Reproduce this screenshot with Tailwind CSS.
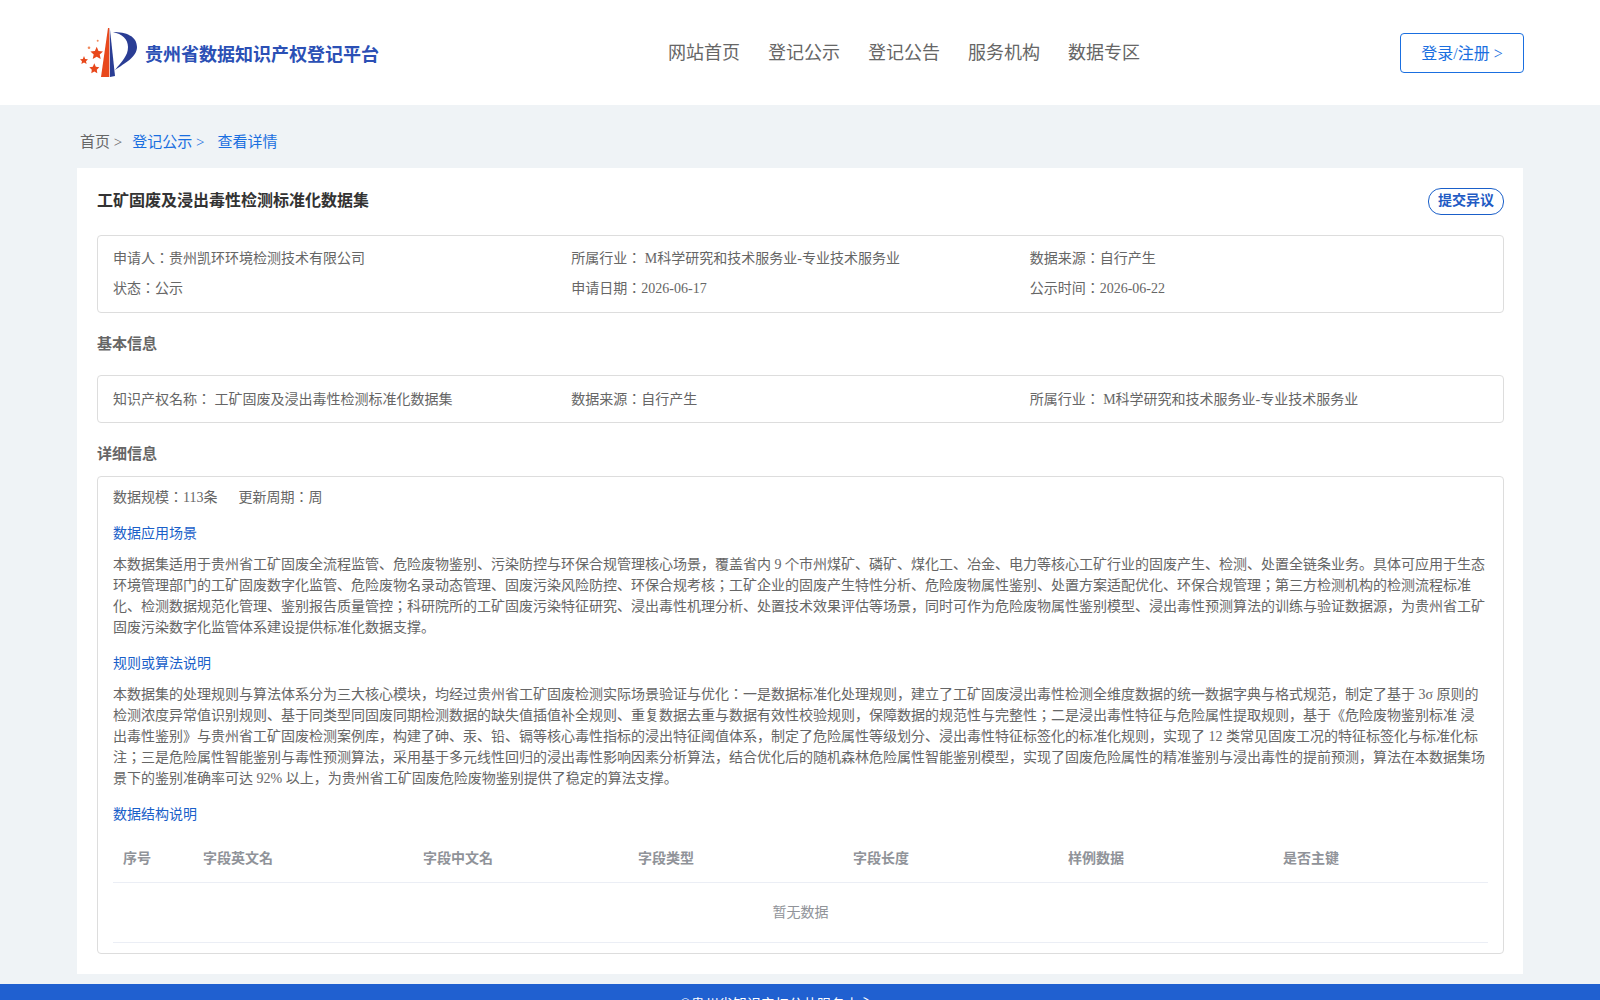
<!DOCTYPE html>
<html lang="en">
<head>
    <meta charset="UTF-8">
    <title>工矿固废及浸出毒性检测标准化数据集</title>
    <script src="https://cdn.jsdelivr.net/npm/@tailwindcss/browser@4"></script>
</head>
<body class="h-[1000px] overflow-hidden bg-[#eff3f6] font-['Liberation_Serif','Noto_Sans_CJK_JP',serif] text-sm text-[#666]">
    <!-- Header -->
    <header class="flex h-[105px] items-center bg-white pl-[80px] pr-[76px]">
        <div class="flex w-[588px] shrink-0 items-center">
            <svg class="h-[51px] w-[60px] shrink-0" viewBox="0 0 60 51">
                <path d="M28 1 L29.300 1 L29.300 50 L21 50 Z" fill="#e8481c"/>
                <path d="M29.800 1 L35 49 L30 50 Z" fill="#2a3d94"/>
                <path d="M33 5 C46 5 57 9 57 20 C57 30 45 36 35 43 C42 34 48 29 48 20 C48 12 42 7 33 5 Z" fill="#2a3d94"/>
                <polygon points="16.700,19.700 18.500,24 23,24.500 19.700,27.500 20.700,32 16.700,29.700 12.700,32 13.700,27.500 10.400,24.500 14.900,24" fill="#e8481c"/>
                <polygon points="4,29 5.200,32 8,32.300 6,34.300 6.600,37 4,35.600 1.400,37 2,34.300 0,32.300 2.800,32" fill="#e8481c"/>
                <polygon points="14.300,36.300 15.800,39.800 19.300,40.300 16.800,42.800 17.300,46.300 14.300,44.600 11.300,46.300 11.800,42.800 9.300,40.300 12.800,39.800" fill="#e8481c"/>
                <circle cx="9" cy="20.700" r="1.300" fill="#f08a5d"/>
                <circle cx="17.700" cy="13.700" r="1" fill="#f08a5d"/>
            </svg>
            <span class="ml-[5px] mt-[5px] text-lg font-bold whitespace-nowrap text-[#2b50b5]">贵州省数据知识产权登记平台</span>
        </div>
        <nav class="flex shrink-0 gap-[28px] text-lg leading-[24px] whitespace-nowrap text-[#666]">
            <a>网站首页</a>
            <a>登记公示</a>
            <a>登记公告</a>
            <a>服务机构</a>
            <a>数据专区</a>
        </nav>
        <a class="ml-auto flex h-10 w-[124px] items-center justify-center rounded border border-[#1a6fe0] pt-[2px] text-base text-[#1a6fe0]">登录/注册 &gt;</a>
    </header>

    <div class="mx-[77px]">
        <!-- Breadcrumb -->
        <div class="flex h-[63px] items-center pl-[3px] pt-[13px] text-[15px]">
            <span>首页 &gt;</span>
            <span class="ml-[10px] text-[#1a6fe0]">登记公示 &gt;</span>
            <span class="ml-[13px] text-[#1a6fe0]">查看详情</span>
        </div>

        <!-- Main card -->
        <main class="h-[806px] bg-white pl-5 pr-[19px] pt-5">
            <div class="flex h-[26px] items-center justify-between">
                <h1 class="text-base font-bold text-[#333]">工矿固废及浸出毒性检测标准化数据集</h1>
                <button class="h-[27px] w-[76px] rounded-[13px] border border-[#1a5fc9] font-bold text-[#1f5bc4]">提交异议</button>
            </div>

            <div class="mt-[21px] h-[78px] rounded border border-[#ddd] px-[15px] pt-[12px]">
                <div class="grid grid-cols-3 gap-y-[9px] leading-[21px]">
                    <div>申请人：贵州凯环环境检测技术有限公司</div>
                    <div>所属行业： M科学研究和技术服务业-专业技术服务业</div>
                    <div>数据来源：自行产生</div>
                    <div>状态：公示</div>
                    <div>申请日期：2026-06-17</div>
                    <div>公示时间：2026-06-22</div>
                </div>
            </div>

            <h2 class="mt-[21px] text-[15px] leading-[21px] font-bold">基本信息</h2>
            <div class="mt-[20px] h-[48px] rounded border border-[#ddd] px-[15px] pt-[13px]">
                <div class="grid grid-cols-3 leading-[21px]">
                    <div>知识产权名称： 工矿固废及浸出毒性检测标准化数据集</div>
                    <div>数据来源：自行产生</div>
                    <div>所属行业： M科学研究和技术服务业-专业技术服务业</div>
                </div>
            </div>

            <h2 class="mt-[21px] text-[15px] leading-[21px] font-bold">详细信息</h2>
            <section class="mt-[11px] h-[478px] rounded border border-[#ddd] px-[15px] pt-[10px] leading-[21px]">
                <div class="flex gap-[21px]">
                    <span>数据规模：113条</span>
                    <span>更新周期：周</span>
                </div>
                <h3 class="mt-[15px] text-[#1a5fc9]">数据应用场景</h3>
                <p class="mt-[10px]">本数据集适用于贵州省工矿固废全流程监管、危险废物鉴别、污染防控与环保合规管理核心场景，覆盖省内 9 个市州煤矿、磷矿、煤化工、冶金、电力等核心工矿行业的固废产生、检测、处置全链条业务。具体可应用于生态环境管理部门的工矿固废数字化监管、危险废物名录动态管理、固废污染风险防控、环保合规考核；工矿企业的固废产生特性分析、危险废物属性鉴别、处置方案适配优化、环保合规管理；第三方检测机构的检测流程标准化、检测数据规范化管理、鉴别报告质量管控；科研院所的工矿固废污染特征研究、浸出毒性机理分析、处置技术效果评估等场景，同时可作为危险废物属性鉴别模型、浸出毒性预测算法的训练与验证数据源，为贵州省工矿固废污染数字化监管体系建设提供标准化数据支撑。</p>
                <h3 class="mt-[15px] text-[#1a5fc9]">规则或算法说明</h3>
                <p class="mt-[10px]">本数据集的处理规则与算法体系分为三大核心模块，均经过贵州省工矿固废检测实际场景验证与优化：一是数据标准化处理规则，建立了工矿固废浸出毒性检测全维度数据的统一数据字典与格式规范，制定了基于 3σ 原则的检测浓度异常值识别规则、基于同类型同固废同期检测数据的缺失值插值补全规则、重复数据去重与数据有效性校验规则，保障数据的规范性与完整性；二是浸出毒性特征与危险属性提取规则，基于《危险废物鉴别标准 浸出毒性鉴别》与贵州省工矿固废检测案例库，构建了砷、汞、铅、镉等核心毒性指标的浸出特征阈值体系，制定了危险属性等级划分、浸出毒性特征标签化的标准化规则，实现了 12 类常见固废工况的特征标签化与标准化标注；三是危险属性智能鉴别与毒性预测算法，采用基于多元线性回归的浸出毒性影响因素分析算法，结合优化后的随机森林危险属性智能鉴别模型，实现了固废危险属性的精准鉴别与浸出毒性的提前预测，算法在本数据集场景下的鉴别准确率可达 92% 以上，为贵州省工矿固废危险废物鉴别提供了稳定的算法支撑。</p>
                <h3 class="mt-[15px] text-[#1a5fc9]">数据结构说明</h3>
                <!-- Table -->
                <div class="mt-[9px] grid h-[49px] grid-cols-[80px_220px_repeat(5,215px)] items-center border-b border-[#ebeef5] font-bold text-[#909399]">
                    <div class="pl-[10px]">序号</div>
                    <div class="pl-[10px]">字段英文名</div>
                    <div class="pl-[10px]">字段中文名</div>
                    <div class="pl-[10px]">字段类型</div>
                    <div class="pl-[10px]">字段长度</div>
                    <div class="pl-[10px]">样例数据</div>
                    <div class="pl-[10px]">是否主键</div>
                </div>
                <div class="flex h-[60px] items-center justify-center border-b border-[#ebeef5] text-[#909399]">暂无数据</div>
            </section>
        </main>
    </div>

    <!-- Footer -->
    <footer class="mt-[10px] h-[60px] bg-[#2060d0] pl-[680px] pt-[11px] text-white">©贵州省知识产权公共服务中心</footer>
</body>
</html>
